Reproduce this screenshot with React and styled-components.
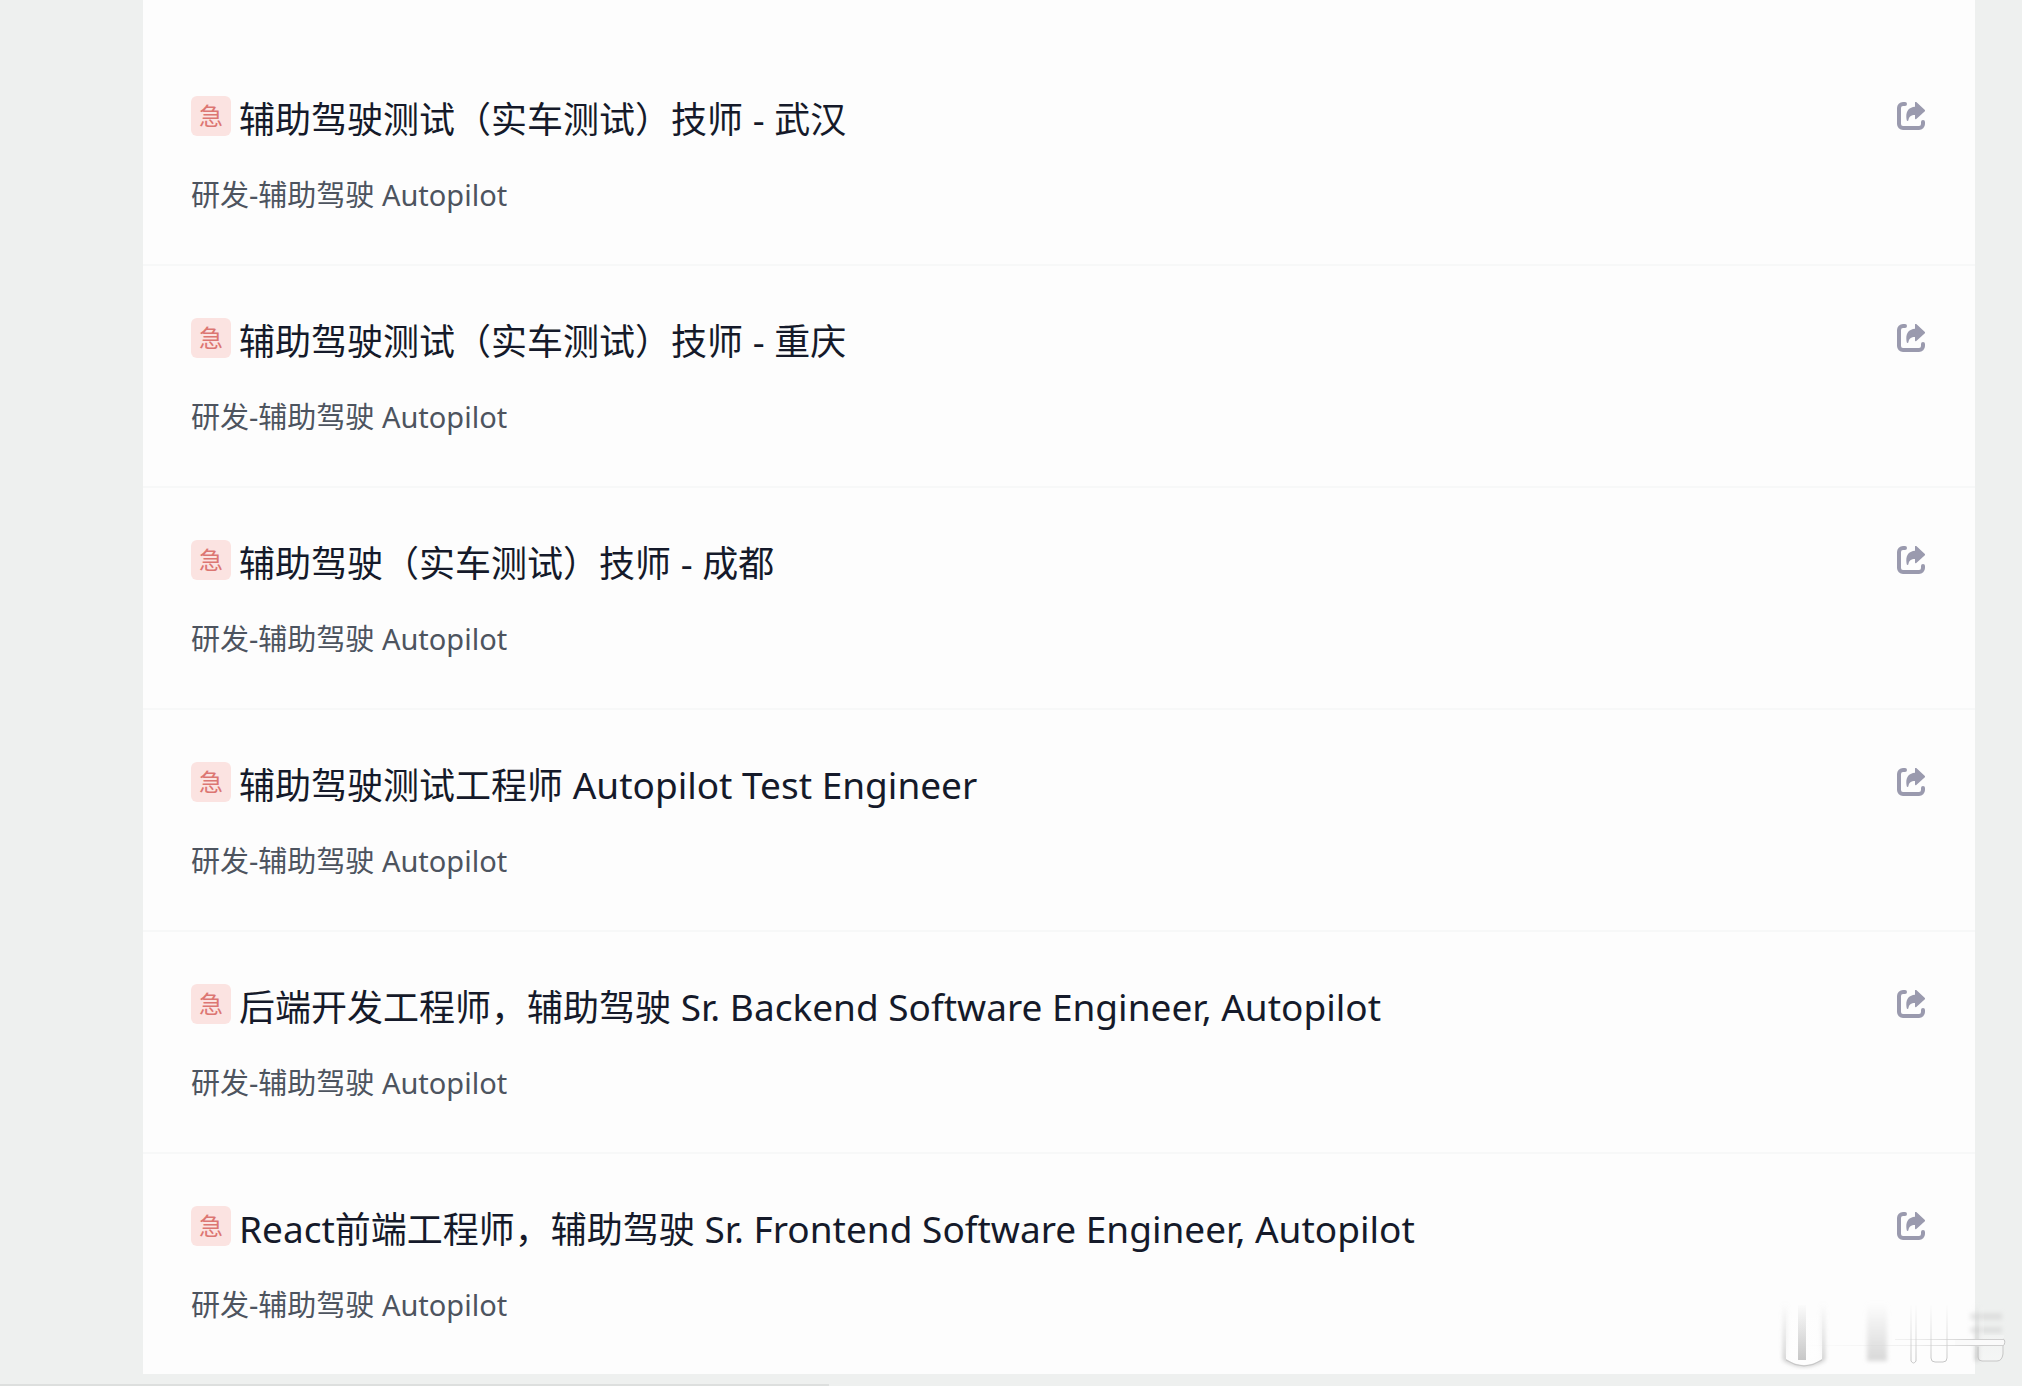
import React from 'react';
import styled, { createGlobalStyle } from 'styled-components';

const GlobalStyle = createGlobalStyle`
  body {
    margin: 0;
    background-color: #eef0ef;
    font-family: "Noto Sans", "Noto Sans CJK SC", sans-serif;
  }
`;

const Page = styled.div`
  position: relative;
  min-height: 100vh;
  box-sizing: border-box;
  padding: 0 47px 0 143px;
  display: flex;
  flex-direction: column;
`;

const JobList = styled.ul`
  margin: 0;
  padding: 44px 0 0;
  list-style: none;
  background-color: #fdfdfd;
`;

const JobRow = styled.li`
  display: flex;
  justify-content: space-between;
  align-items: flex-start;
  padding: 47px 50px 49px 48px;
  border-bottom: 2px solid #f7f8f8;

  &:last-child {
    border-bottom: none;
  }
`;

const JobInfo = styled.div`
  display: flex;
  flex-direction: column;
  gap: 31px;
`;

const JobHeading = styled.div`
  display: flex;
  align-items: flex-start;
  gap: 8px;
  padding-top: 5px;
`;

const UrgentTag = styled.span`
  width: 40px;
  height: 40px;
  border-radius: 6px;
  background-color: #fbe3e1;
  color: #dc7672;
  font-size: 24px;
  line-height: 40px;
  text-align: center;
`;

const JobTitle = styled.a`
  color: #151a2a;
  font-size: 36px;
  line-height: 48px;
  text-decoration: none;
`;

/* English words run slightly larger than the Chinese around them */
const Latin = styled.span`
  font-size: 37px;
  line-height: 1;
`;

const JobTeam = styled.p`
  margin: 0;
  color: #4d545f;
  font-size: 29px;
  line-height: 40px;
`;

const ShareButton = styled.button`
  display: flex;
  margin: 11px 0 0;
  padding: 0;
  border: none;
  background: none;
  color: #9a9aae;
  cursor: pointer;
`;

const FooterBar = styled.div`
  position: absolute;
  left: 0;
  bottom: 0;
  width: 41%;
  height: 2px;
  background-color: #dddfde;
`;

const WatermarkSvg = styled.svg`
  position: absolute;
  right: 12px;
  bottom: 16px;
  pointer-events: none;
`;

const jobs = [
  '辅助驾驶测试（实车测试）技师 - 武汉',
  '辅助驾驶测试（实车测试）技师 - 重庆',
  '辅助驾驶（实车测试）技师 - 成都',
  '辅助驾驶测试工程师 Autopilot Test Engineer',
  '后端开发工程师，辅助驾驶 Sr. Backend Software Engineer, Autopilot',
  'React前端工程师，辅助驾驶 Sr. Frontend Software Engineer, Autopilot',
];

const renderTitle = (title) =>
  title
    .split(/([\x20-\x7e]+)/)
    .filter(Boolean)
    .map((part, i) => (/^[\x20-\x7e]/.test(part) ? <Latin key={i}>{part}</Latin> : part));

const ShareIcon = () => (
  <svg width="28" height="28" viewBox="0 0 28 28" fill="none" aria-hidden="true">
    <path
      d="M8 2H6a4 4 0 0 0-4 4v16a4 4 0 0 0 4 4h16a4 4 0 0 0 4-4v-2"
      stroke="currentColor"
      strokeWidth="4"
      strokeLinecap="round"
    />
    <path
      d="M18 0.6c0-.8.8-1 1.300-.5l8.300 7.700c.6.600.6 1.100 0 1.700l-8.300 7.600c-.6.500-1.300.2-1.300-.5V13c-4 0-6 1.500-6.600 5.300-.2 1-1.500 1-1.700 0C8.200 10.500 11 5.300 18 4.800z"
      fill="currentColor"
    />
  </svg>
);

const Watermark = () => (
  <WatermarkSvg width="240" height="75" viewBox="0 0 240 75" fill="none" aria-hidden="true">
    <defs>
      <linearGradient id="fadeDark" x1="0" y1="8" x2="0" y2="66" gradientUnits="userSpaceOnUse">
        <stop offset="0" stopColor="#c6c6c6" stopOpacity="0" />
        <stop offset="1" stopColor="#c6c6c6" />
      </linearGradient>
      <linearGradient id="fadeSoft" x1="0" y1="8" x2="0" y2="66" gradientUnits="userSpaceOnUse">
        <stop offset="0" stopColor="#d8d8d8" stopOpacity="0" />
        <stop offset="1" stopColor="#d8d8d8" />
      </linearGradient>
      <linearGradient id="fadeWhite" x1="0" y1="8" x2="0" y2="66" gradientUnits="userSpaceOnUse">
        <stop offset="0" stopColor="#fefefe" stopOpacity="0" />
        <stop offset="1" stopColor="#fefefe" />
      </linearGradient>
      <linearGradient id="fadeRight" x1="30" y1="0" x2="210" y2="0" gradientUnits="userSpaceOnUse">
        <stop offset="0" stopColor="#cfcfcf" stopOpacity="0" />
        <stop offset="0.6" stopColor="#cfcfcf" stopOpacity="0.3" />
        <stop offset="1" stopColor="#cfcfcf" />
      </linearGradient>
      <filter id="soft" x="-20%" y="-20%" width="140%" height="140%">
        <feGaussianBlur stdDeviation="2" />
      </filter>
    </defs>

    <g filter="url(#soft)">
      <path d="M15 8V64Q34 75 53 64V8" stroke="url(#fadeDark)" strokeWidth="4" />
      <rect x="97" y="8" width="20" height="58" fill="url(#fadeSoft)" />
      <rect x="200" y="18" width="32" height="7" fill="url(#fadeRight)" opacity="0.5" />
      <rect x="200" y="32" width="32" height="6" fill="url(#fadeRight)" opacity="0.5" />
      <path d="M207 10V66" stroke="url(#fadeDark)" strokeWidth="4" />
    </g>

    <path d="M16 8V64Q34 76 52 64V8z" fill="url(#fadeWhite)" />
    <path d="M16 65Q34 77 52 65" stroke="#c6c6c6" />
    <rect x="28" y="10" width="8" height="55" fill="url(#fadeDark)" />

    <g stroke="url(#fadeDark)">
      <path d="M141 10V66q2.500 4 5 0V10" />
      <path d="M161 10V63q0 4 4 4h8q4 0 4-4V10" />
    </g>
    <path d="M209 10V62q0 4 4 4h14q5 0 5-5l2-10V40h-20V10z" fill="url(#fadeWhite)" opacity="0.4" />
    <path d="M208 52V62q0 4 4 4h15q5 0 6-7V51" stroke="#c6c6c6" />
    <path d="M185 45h48l2 2-1 4h-49z" fill="#fafafa" />
    <rect x="30" y="50" width="204" height="1" fill="url(#fadeRight)" />
    <rect x="125" y="44" width="108" height="1" fill="url(#fadeRight)" />
    <path d="M233 44q3 1 1 6" stroke="#c6c6c6" />
  </WatermarkSvg>
);

const App = () => {
  return (
    <>
      <GlobalStyle />
      <Page>
        <JobList>
          {jobs.map((title) => (
            <JobRow key={title}>
              <JobInfo>
                <JobHeading>
                  <UrgentTag>急</UrgentTag>
                  <JobTitle href="#">{renderTitle(title)}</JobTitle>
                </JobHeading>
                <JobTeam>研发-辅助驾驶 Autopilot</JobTeam>
              </JobInfo>
              <ShareButton type="button" aria-label="分享">
                <ShareIcon />
              </ShareButton>
            </JobRow>
          ))}
        </JobList>
        <FooterBar />
        <Watermark />
      </Page>
    </>
  );
};

export default App;
